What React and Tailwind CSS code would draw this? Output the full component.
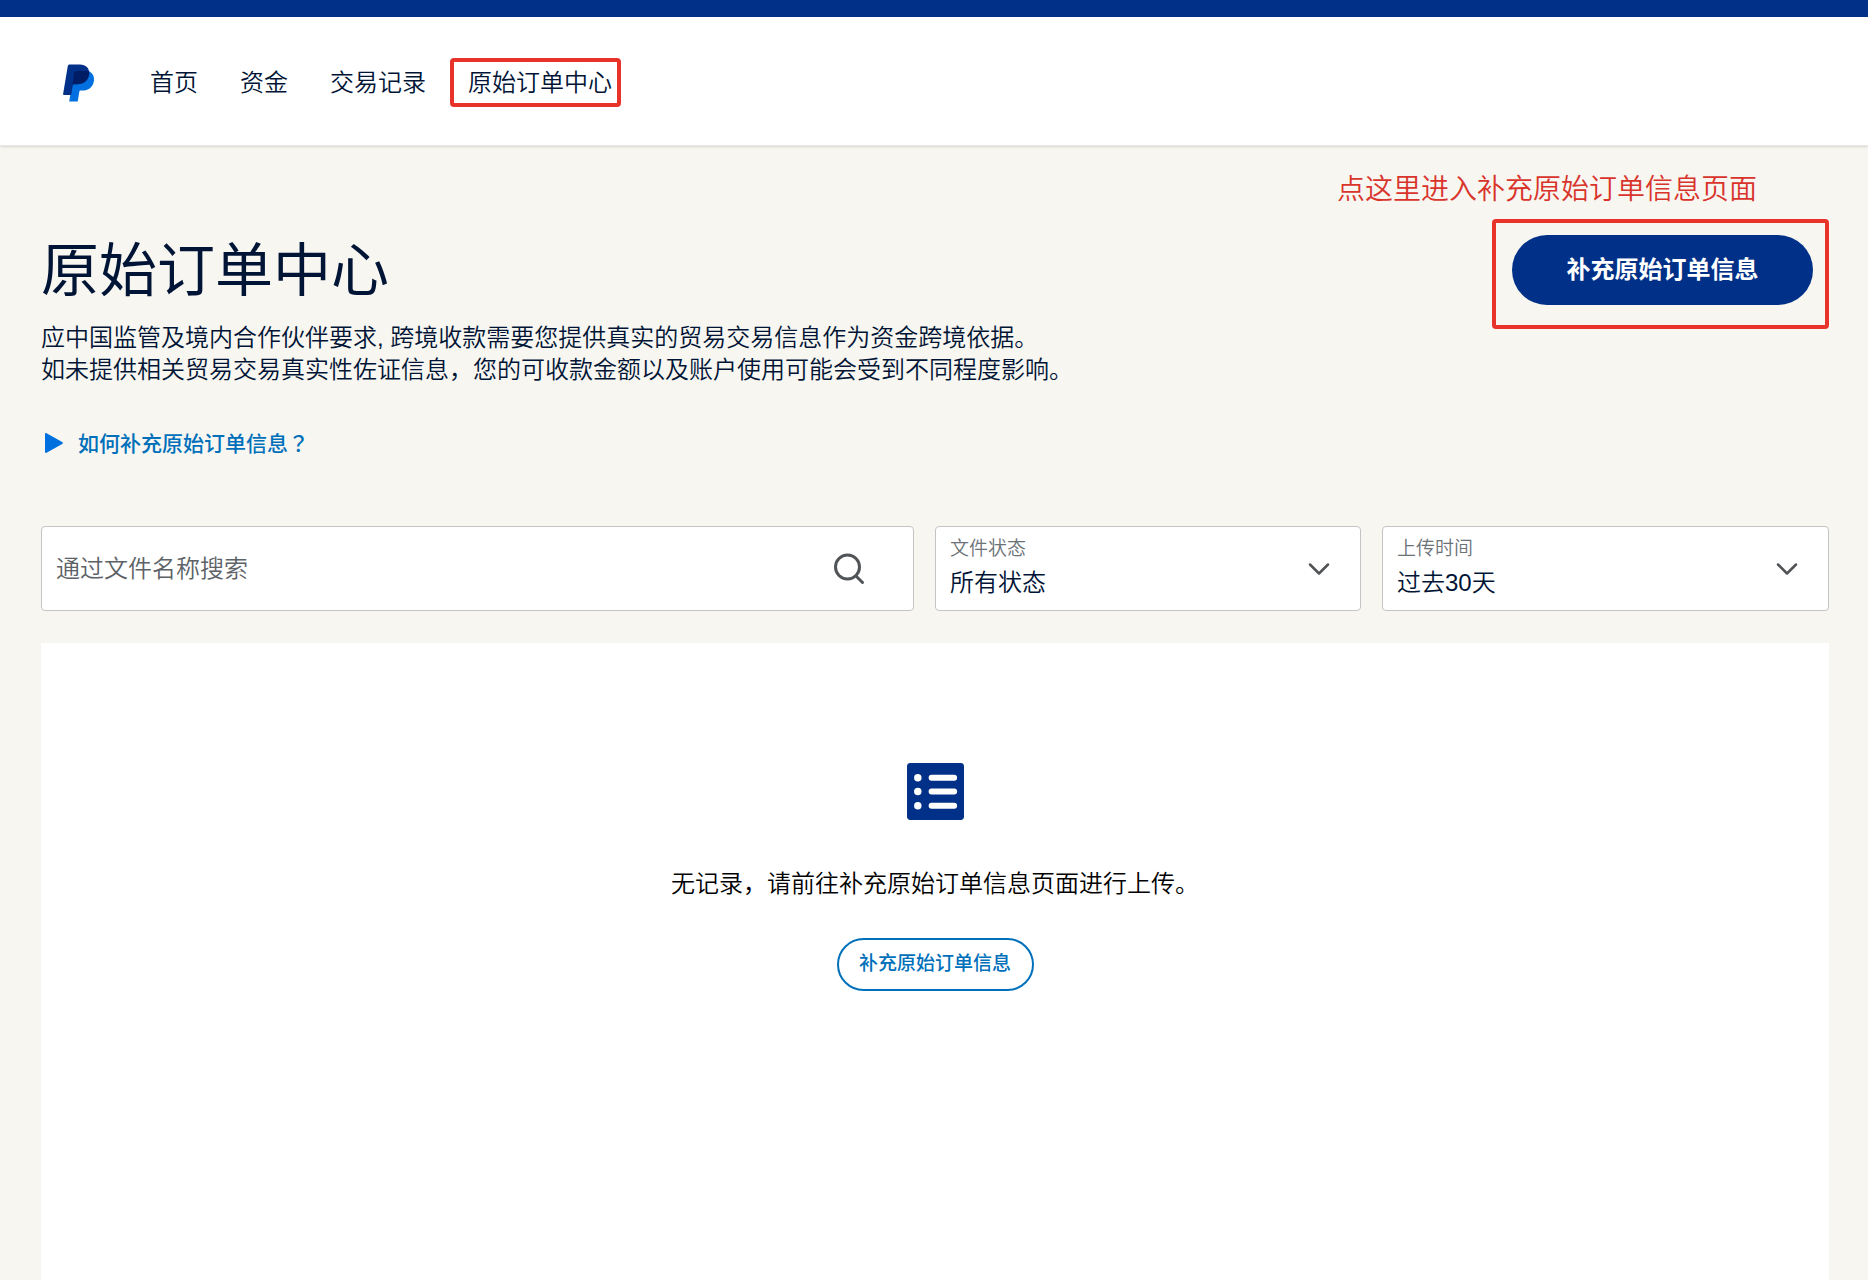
const navItems = ["首页", "资金", "交易记录"];

function Logo() {
  return (
    <svg viewBox="0 0 32 38" className="h-[38px] w-8" aria-hidden="true">
      <path
        fill="#0070e0"
        d="M25.5 7C29.6 9 31.6 12.4 30.9 17c-1 6.400-5.600 9.600-11.700 9.600h-1.400c-.8 0-1.400.5-1.500 1.300L14.700 37.600H6.200L9.300 18z"
      />
      <path
        fill="#003087"
        d="M6.600.4H17c5.600 0 9.700 3.600 9.200 9.200-.7 7.300-5.600 10.600-12.200 10.600h-2.800c-.8 0-1.400.5-1.500 1.300L8.200 31H.8c-.5 0-.8-.4-.7-.9L4.800 1.900C4.900 1 5.700.4 6.600.4z"
      />
      <path
        fill="#001c64"
        d="M26.100 7.300c.1.700.2 1.500.1 2.300-.7 7.300-5.600 10.600-12.200 10.600h-2.800c-.8 0-1.400.5-1.500 1.300l-.5 2.500L11 9.400c.2-1.400 1.300-2.500 3-2.500h8c1.500 0 2.900.1 4.100.4z"
      />
    </svg>
  );
}

function Chevron() {
  return (
    <svg
      viewBox="0 0 22 14"
      className="pointer-events-none absolute top-1/2 right-[30px] h-[14px] w-[22px] -translate-y-1/2"
      fill="none"
      stroke="#515457"
      strokeWidth="2.500"
      strokeLinecap="round"
      strokeLinejoin="round"
      aria-hidden="true"
    >
      <path d="M2 2.500l9 9 9-9" />
    </svg>
  );
}

function SelectField({ id, label, options }) {
  return (
    <div className="relative h-[85px] rounded border border-[#c3c5c4] bg-white">
      <label htmlFor={id} className="absolute top-2 left-[14px] text-[19px] leading-7 text-[#6c7378]">
        {label}
      </label>
      <select
        id={id}
        className="h-full w-full appearance-none bg-transparent pt-7 pr-16 pl-[14px] text-2xl font-[350] text-[#001435]"
      >
        {options.map((option) => (
          <option key={option}>{option}</option>
        ))}
      </select>
      <Chevron />
    </div>
  );
}

export default function App() {
  return (
    <div className="flex min-h-screen flex-col bg-[#f7f6f1] font-['Liberation_Sans','Noto_Sans_CJK_SC',sans-serif] font-[350] text-[#001435]">
      <div className="h-[17px] bg-[#003087]" />
      <header className="flex h-[129px] items-center border-b border-[#e9e8e6] bg-white pt-[3px] pl-[63px] shadow-sm">
        <a href="#home" aria-label="PayPal">
          <Logo />
        </a>
        <nav className="ml-[55px] flex items-center text-2xl">
          {navItems.map((item) => (
            <a key={item} href="#nav" className="mr-[42px]">
              {item}
            </a>
          ))}
          <a
            href="#orders"
            className="-ml-[18px] flex h-[49px] items-center rounded border-4 border-[#e8332a] pr-[5px] pl-[14px]"
          >
            原始订单中心
          </a>
        </nav>
      </header>

      <main className="flex grow flex-col pt-6 pr-[39px] pl-[41px]">
        <div className="flex justify-between">
          <div className="pt-[61px]">
            <h1 className="text-[58px] leading-[80px] font-normal">原始订单中心</h1>
            <p className="mt-[11px] text-2xl leading-8">
              应中国监管及境内合作伙伴要求, 跨境收款需要您提供真实的贸易交易信息作为资金跨境依据。
              <br />
              如未提供相关贸易交易真实性佐证信息，您的可收款金额以及账户使用可能会受到不同程度影响。
            </p>
          </div>
          <div className="flex flex-col items-end">
            <p className="mt-[2px] mr-[72px] text-[28px] leading-9 text-[#d9342b]">点这里进入补充原始订单信息页面</p>
            <div className="mt-[11px] rounded border-4 border-[#e8332a] pt-3 pr-3 pb-5 pl-4">
              <button
                type="button"
                className="h-[70px] w-[301px] rounded-full bg-[#003087] text-2xl font-bold text-white"
              >
                补充原始订单信息
              </button>
            </div>
          </div>
        </div>

        <a
          href="#guide"
          className="mt-10 flex items-center gap-[15px] self-start pl-1 text-[21px] leading-8 font-medium text-[#0070ba]"
        >
          <svg viewBox="0 0 18 20" className="h-5 w-[18px]" fill="#0070e0" aria-hidden="true">
            <path d="M0 1.200C0 .3.800-.2 1.600.2l15.600 8.700c.9.500.9 1.700 0 2.200L1.600 19.800C.8 20.200 0 19.700 0 18.800z" />
          </svg>
          <span>
            如何补充原始订单信息<span className="font-['Noto_Sans_CJK_JP',sans-serif]">？</span>
          </span>
        </a>

        <form className="mt-[66px] grid grid-cols-[873fr_426fr_447fr] gap-[21px]">
          <div className="flex h-[85px] items-center rounded border border-[#c3c5c4] bg-white pr-12 pl-[14px]">
            <input
              type="text"
              aria-label="通过文件名称搜索"
              placeholder="通过文件名称搜索"
              className="h-full min-w-0 grow bg-transparent text-2xl font-[350] outline-none placeholder:text-[#5c6266]"
            />
            <button type="button" aria-label="搜索">
              <svg
                viewBox="0 0 32 32"
                className="size-8"
                fill="none"
                stroke="#515457"
                strokeWidth="3"
                strokeLinecap="round"
                aria-hidden="true"
              >
                <circle cx="14.500" cy="14" r="12" />
                <path d="M23 23l6.500 6.500" />
              </svg>
            </button>
          </div>
          <SelectField id="status" label="文件状态" options={["所有状态"]} />
          <SelectField id="period" label="上传时间" options={["过去30天"]} />
        </form>

        <section className="mt-8 flex grow flex-col items-center bg-white pt-[120px] pb-10">
          <svg viewBox="0 0 58 58" className="size-[57px]" aria-hidden="true">
            <rect width="58" height="58" rx="3.500" fill="#003087" />
            <g fill="#fff">
              <circle cx="11" cy="15" r="3.800" />
              <circle cx="11" cy="29" r="3.800" />
              <circle cx="11" cy="43.500" r="3.800" />
              <rect x="22" y="12" width="29" height="6" rx="3" />
              <rect x="22" y="26" width="29" height="6" rx="3" />
              <rect x="22" y="40.500" width="29" height="6" rx="3" />
            </g>
          </svg>
          <p className="mt-12 text-2xl leading-8 text-black">
            无记录，请前往补充原始订单信息页面进行上传。
          </p>
          <button
            type="button"
            className="mt-[38px] h-[53px] w-[197px] rounded-full border-2 border-[#0070ba] text-[19px] font-medium text-[#0070ba]"
          >
            补充原始订单信息
          </button>
        </section>
      </main>
    </div>
  );
}
